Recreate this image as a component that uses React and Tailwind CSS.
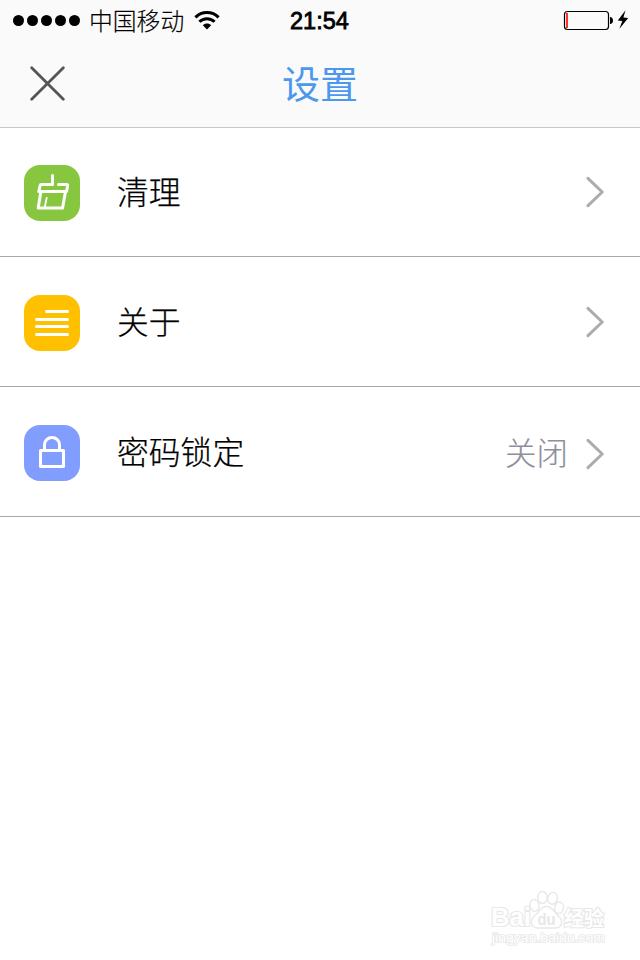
function StatusBar() {
  return (
    <div className="flex h-10 items-center">
      <div className="flex w-[290px] items-center pl-[13px]">
        <div className="flex gap-[3px]">
          {[0, 1, 2, 3, 4].map((dot) => (
            <span key={dot} className="size-[11px] rounded-full bg-black" />
          ))}
        </div>
        <span className="ml-[9px] text-[23.8px] leading-10 font-light whitespace-nowrap [-webkit-text-stroke:0.15px_#000]">中国移动</span>
        <svg className="ml-[10px] h-[19px] w-[26px] shrink-0" viewBox="0 0 26 19" fill="none" stroke="#000" strokeWidth="3">
          <path d="M1.4 6.4C7.8 0 18.2 0 24.6 6.4" />
          <path d="M5.4 10.8C9.7 6.6 16.3 6.6 20.6 10.8" />
          <path d="M8.8 14.3C11.1 11.9 14.9 11.9 17.2 14.3L13 18.5Z" fill="#000" stroke="none" />
        </svg>
      </div>
      <span className="w-[60px] pt-0.5 font-['Liberation_Sans',Arial,sans-serif] text-[23.5px] leading-10 whitespace-nowrap [-webkit-text-stroke:0.8px_#000]">21:54</span>
      <svg className="ml-[213px] h-[22px] w-[68px] translate-y-px" viewBox="563 10 68 22">
        <rect x="564.5" y="11.5" width="44" height="18" rx="3" fill="none" stroke="#000" strokeWidth="1.2" />
        <rect x="566" y="13" width="2" height="15" fill="#f9352b" />
        <path d="M610 17c1.8 0 3 1.6 3 3.6s-1.2 3.5-3 3.5z" />
        <path d="M625.5 10.2L617.8 20.5L622.3 20.9L619.3 28.9L628.2 17.9L623.4 17.6Z" />
      </svg>
    </div>
  );
}

function BroomIcon() {
  return (
    <svg className="size-14" viewBox="0 0 56 56" fill="none" stroke="#fff" strokeWidth="3" strokeLinecap="round" strokeLinejoin="round">
      <path d="M28.5 10.5V19.5H17.5Q16.2 19.5 16 20.7L14.8 26.5H42.5L43.7 20.7Q43.9 19.5 42.7 19.5H34.5" />
      <path d="M16.8 27L14.2 43H38.6L41.4 27" />
      <path d="M22.7 33L20.8 42" strokeWidth="1.8" />
    </svg>
  );
}

function LinesIcon() {
  return (
    <svg className="size-14" viewBox="0 0 56 56" fill="none" stroke="#fff" strokeWidth="3" strokeLinecap="round">
      <path d="M22.5 16.5H43.5M12.5 24.5H43.5M12.5 31.5H43.5M12.5 39.5H43.5" />
    </svg>
  );
}

function LockIcon() {
  return (
    <svg className="size-14" viewBox="0 0 56 56" fill="none" stroke="#fff" strokeWidth="3" strokeLinejoin="round">
      <rect x="16.5" y="25.5" width="23" height="16" />
      <path d="M20.5 25V19.5a7.5 7 0 0 1 15 0V25" />
    </svg>
  );
}

function Chevron() {
  return (
    <svg className="h-8 w-[18px]" viewBox="0 0 18 32" fill="none" stroke="#acacac" strokeWidth="3" strokeLinecap="round" strokeLinejoin="round">
      <path d="M2 2.3L16.2 16L2 29.7" />
    </svg>
  );
}

function Row({ icon, color, label, value }) {
  return (
    <li className="flex h-[130px] items-center border-b border-[#a9a9ab] pt-[3px] pr-9 pl-6">
      <span className={`size-14 rounded-2xl ${color}`}>{icon}</span>
      <span className="mb-1.5 ml-[37px] text-[31.8px] leading-10 font-light [-webkit-text-stroke:0.25px_#000]">{label}</span>
      <span className="mr-[18px] mb-1 ml-auto text-[31.5px] leading-10 font-light text-[#8e8e9c] [-webkit-text-stroke:0.15px_#8e8e9c]">{value}</span>
      <span className={value ? "pt-px" : "pb-0.5"}>
        <Chevron />
      </span>
    </li>
  );
}

function Watermark() {
  return (
    <svg className="mr-[30px] mb-[10px] h-[62px] w-[122px]" viewBox="488 888 122 62" fill="#fff" stroke="#e8e8e8" strokeWidth="1.4">
      <g fontFamily="Liberation Sans, Arial, sans-serif" fontWeight="bold" paintOrder="stroke" strokeWidth="2.2">
        <text x="491" y="926" fontSize="25" textLength="40" lengthAdjust="spacingAndGlyphs">Bai</text>
        <text x="564" y="926" fontSize="20" fontFamily="Noto Sans CJK SC, sans-serif" textLength="40">经验</text>
        <text x="492" y="942" fontSize="12.5" fontWeight="normal" textLength="113" lengthAdjust="spacingAndGlyphs" strokeWidth="1.6">jingyan.baidu.com</text>
      </g>
      <ellipse cx="534.5" cy="905.5" rx="4.5" ry="6" transform="rotate(-10 534.5 905.5)" />
      <ellipse cx="542.4" cy="897.5" rx="4.7" ry="6" />
      <ellipse cx="552.6" cy="898.3" rx="4.7" ry="6" transform="rotate(12 552.6 898.3)" />
      <ellipse cx="559" cy="907.8" rx="4.5" ry="5.8" transform="rotate(12 559 907.8)" />
      <path d="M546.5 906.5C540 906.5 539.5 912 535 915.5C529 920.5 531 927.5 537 928H556C562 927.5 564 920.5 558 915.5C553.5 912 553 906.5 546.5 906.5Z" />
      <text x="537.5" y="924.5" fontSize="17" fontFamily="Liberation Sans, Arial, sans-serif" fontWeight="bold" fill="#e6e6e6" stroke="none" textLength="18" lengthAdjust="spacingAndGlyphs">du</text>
    </svg>
  );
}

export default function App() {
  return (
    <main className="flex h-[960px] w-[640px] flex-col overflow-hidden bg-white font-['Noto_Sans_CJK_SC',sans-serif] text-black">
      <header className="h-32 shrink-0 border-b border-[#c8c8c8] bg-[#fafafa]">
        <StatusBar />
        <div className="grid h-[87px] grid-cols-3 items-center px-[30px]">
          <button aria-label="关闭" className="size-[35px]">
            <svg className="size-[35px]" viewBox="0 0 35 35" stroke="#555" strokeWidth="2.8" strokeLinecap="round">
              <path d="M1.7 1.7L33.3 33.3M33.3 1.7L1.7 33.3" />
            </svg>
          </button>
          <h1 className="pb-1 text-center text-[38px] leading-[48px] font-normal text-[#4b98ec]">设置</h1>
        </div>
      </header>
      <ul className="-mt-px shrink-0">
        <Row icon={<BroomIcon />} color="bg-[#87c740]" label="清理" />
        <Row icon={<LinesIcon />} color="bg-[#ffc000]" label="关于" />
        <Row icon={<LockIcon />} color="bg-[#809dff]" label="密码锁定" value="关闭" />
      </ul>
      <footer className="mt-auto flex justify-end">
        <Watermark />
      </footer>
    </main>
  );
}
